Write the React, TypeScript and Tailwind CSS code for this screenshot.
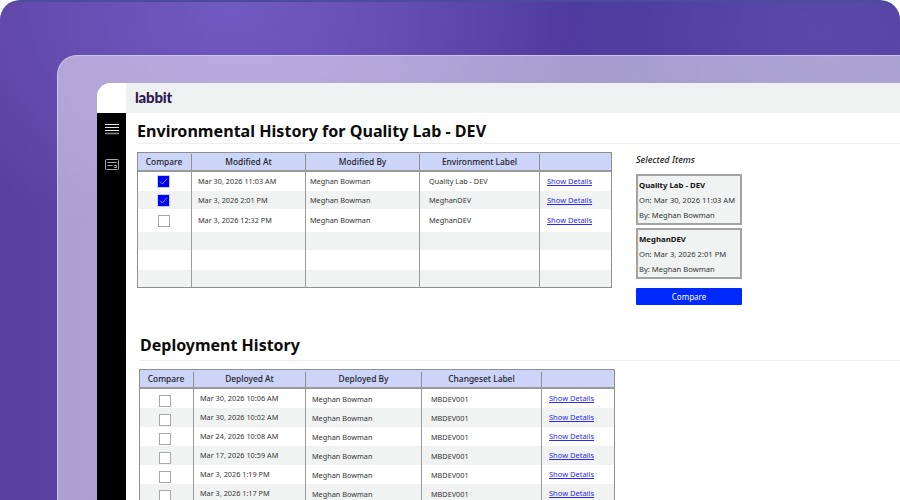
const envRows = [
  { at: "Mar 30, 2026 11:03 AM", by: "Meghan Bowman", label: "Quality Lab - DEV", checked: true, h: "h-[19px]", pad: "" },
  { at: "Mar 3, 2026 2:01 PM", by: "Meghan Bowman", label: "MeghanDEV", checked: true, h: "h-[18px]", pad: "pt-[1px]" },
  { at: "Mar 3, 2026 12:32 PM", by: "Meghan Bowman", label: "MeghanDEV", checked: false, h: "h-[23px]", pad: "" },
];

const deployRows = [
  "Mar 30, 2026 10:06 AM",
  "Mar 30, 2026 10:02 AM",
  "Mar 24, 2026 10:08 AM",
  "Mar 17, 2026 10:59 AM",
  "Mar 3, 2026 1:19 PM",
  "Mar 3, 2026 1:17 PM",
];

const Box = ({ checked }: { checked?: boolean }) =>
  checked ? (
    <span className="flex h-[13px] w-[13px] items-center justify-center bg-[#0000f5] border border-[#c9cfe8]">
      <svg width="9" height="9" viewBox="0 0 9 9" fill="none" stroke="#b9c4ff" strokeWidth="0.7">
        <path d="M1 4.6 3.4 7 8 1.6" />
      </svg>
    </span>
  ) : (
    <span className="block h-[12px] w-[12px] bg-white border border-[#a9a9a9]" />
  );

const Head = ({ w, children }: { w: string; children?: React.ReactNode }) => (
  <div className={`${w} flex items-center justify-center border-r border-[#8f8f8f] last:border-r-0 text-[8.4px] font-medium text-[#1c1c2a]`}>
    {children}
  </div>
);

const Cell = ({ w, children, className }: { w: string; children?: React.ReactNode; className?: string }) => (
  <div className={`${w} flex items-center h-full border-r border-[#9a9a9a] last:border-r-0 text-[7.3px] text-[#333] ${className ?? ""}`}>
    {children}
  </div>
);

const Details = () => <a className="text-[#2a2ae8] text-[7.5px] underline cursor-pointer">Show Details</a>;

const SelectedCard = ({ name, on }: { name: string; on: string }) => (
  <div className="h-[51px] w-[106px] border-2 border-[#a3a3a3] bg-[#f1f3f2] pl-[1px] pt-[2px] text-[7.6px] leading-[15px] whitespace-nowrap text-[#333]">
    <div className="text-[7.8px] font-bold text-[#111]">{name}</div>
    <div>On: {on}</div>
    <div>By: Meghan Bowman</div>
  </div>
);

const App = () => {
  return (
    <div className="h-[500px] w-[900px] overflow-hidden bg-white font-['Noto_Sans',sans-serif]">
      <div className="h-[500px] rounded-t-[20px] border-t-2 border-[#4b4c9c] bg-[radial-gradient(ellipse_340px_240px_at_230px_10px,#7059c2,transparent),radial-gradient(ellipse_260px_200px_at_820px_30px,#5a49a9,transparent),linear-gradient(90deg,#5a409e_0%,#5f45a8_30%,#4a389c_72%,#52409f_100%)] pt-[53px] pl-[57px]">
        <div className="h-[445px] rounded-tl-[20px] border-t border-l border-[#cbc3e8] bg-white/50 pt-[27px] pl-[39px]">
          <div className="flex h-[418px] overflow-hidden rounded-tl-[14px] bg-white">
            <aside className="w-[29px] shrink-0">
              <div className="h-[30px] bg-white" />
              <div className="flex h-full flex-col items-center bg-black pt-[10px]">
                <svg width="14" height="12" viewBox="0 0 14 12" stroke="#e9e9e9" strokeWidth="1">
                  <path d="M0 1.5h14M0 4.5h14M0 7.5h14" />
                  <path d="M0 10.5h14" stroke="#8a8a8a" strokeWidth="1.4" />
                </svg>
                <svg className="mt-[24px]" width="14" height="11" viewBox="0 0 14 11" fill="none" stroke="#a8a8a8" strokeWidth="1">
                  <rect x="0.5" y="0.5" width="13" height="10" rx="1" />
                  <path d="M2.5 3.5h9M2.5 6.5h5M9 6.5h2.5v2H9" />
                </svg>
              </div>
            </aside>
            <main className="min-w-0 flex-1">
              <header className="flex h-[30px] items-center bg-[#eff1f0] pb-[1px] pl-[9px]">
                <span className="font-['Lato',sans-serif] text-[15px] font-black leading-none tracking-[-0.2px] text-[#2b1a4f]">labbit</span>
              </header>

              <section className="pl-[11px] pt-[7px]">
                <h1 className="text-[16.1px] font-bold leading-[23px] text-[#0c0c0c]">Environmental History for Quality Lab - DEV</h1>
                <div className="h-px bg-[#eeeeee]" />
                <div className="mt-[8px] flex items-start">
                  <div className="w-[475px] border border-[#8f8f8f]">
                    <div className="flex h-[19px] border-b-2 border-[#9a9a9a] bg-[#ccd4f8] pt-[1px]">
                      <Head w="w-[54px] pr-[1px]">Compare</Head>
                      <Head w="w-[114px]">Modified At</Head>
                      <Head w="w-[114px]">Modified By</Head>
                      <Head w="w-[120px]">Environment Label</Head>
                      <Head w="w-[71px]" />
                    </div>
                    {envRows.map((row, i) => (
                      <div key={row.at} className={`flex ${row.h} ${i % 2 ? "bg-[#f1f3f2]" : "bg-white"}`}>
                        <Cell w="w-[54px]" className="justify-center pr-[2px]"><Box checked={row.checked} /></Cell>
                        <Cell w="w-[114px]" className={`pl-[6px] ${row.pad}`}>{row.at}</Cell>
                        <Cell w="w-[114px]" className={`pl-[4px] ${row.pad}`}>{row.by}</Cell>
                        <Cell w="w-[120px]" className={`pl-[9px] ${row.pad}`}>{row.label}</Cell>
                        <Cell w="w-[71px]" className={`pl-[7px] ${row.pad}`}><Details /></Cell>
                      </div>
                    ))}
                    {["bg-[#f1f3f2] h-[18px]", "bg-white h-[20px]", "bg-[#f1f3f2] h-[17px]"].map((c) => (
                      <div key={c} className={`flex ${c}`}>
                        <Cell w="w-[54px]" />
                        <Cell w="w-[114px]" />
                        <Cell w="w-[114px]" />
                        <Cell w="w-[120px]" />
                        <Cell w="w-[71px]" />
                      </div>
                    ))}
                  </div>
                  <aside className="ml-[24px] w-[106px]">
                    <div className="text-[9px] italic font-medium leading-[16px] text-[#1a1a1a]">Selected Items</div>
                    <div className="mt-[6px] flex flex-col gap-[3px]">
                      <SelectedCard name="Quality Lab - DEV" on="Mar 30, 2026 11:03 AM" />
                      <SelectedCard name="MeghanDEV" on="Mar 3, 2026 2:01 PM" />
                    </div>
                    <button className="mt-[9px] h-[17px] w-[106px] rounded-[1px] bg-[#0029ff] text-[8px] text-white">Compare</button>
                  </aside>
                </div>
              </section>

              <section className="pl-[13px] pt-[28px]">
                <h2 className="pl-[1px] text-[16px] font-bold leading-[23px] text-[#0c0c0c]">Deployment History</h2>
                <div className="mt-[3px] h-px bg-[#eeeeee]" />
                <div className="mt-[8px] w-[476px] border border-[#8f8f8f]">
                  <div className="flex h-[19px] border-b-2 border-[#9a9a9a] bg-[#ccd4f8] pt-[2px]">
                    <Head w="w-[54px] pr-[1px]">Compare</Head>
                    <Head w="w-[112px]">Deployed At</Head>
                    <Head w="w-[116px]">Deployed By</Head>
                    <Head w="w-[120px]">Changeset Label</Head>
                    <Head w="w-[72px]" />
                  </div>
                  {deployRows.map((at, i) => (
                    <div key={at} className={`flex h-[19px] ${i % 2 ? "bg-[#f1f3f2]" : "bg-white"}`}>
                      <Cell w="w-[54px]" className="justify-center pr-[4px] pt-[5px]"><Box /></Cell>
                      <Cell w="w-[112px]" className="pl-[6px] pt-[1px]">{at}</Cell>
                      <Cell w="w-[116px]" className="pl-[6px] pt-[3px]">Meghan Bowman</Cell>
                      <Cell w="w-[120px]" className="pl-[9px] pt-[3px]">MBDEV001</Cell>
                      <Cell w="w-[72px]" className="pl-[7px] pt-[1px]"><Details /></Cell>
                    </div>
                  ))}
                </div>
              </section>
            </main>
          </div>
        </div>
      </div>
    </div>
  );
};

export default App;
